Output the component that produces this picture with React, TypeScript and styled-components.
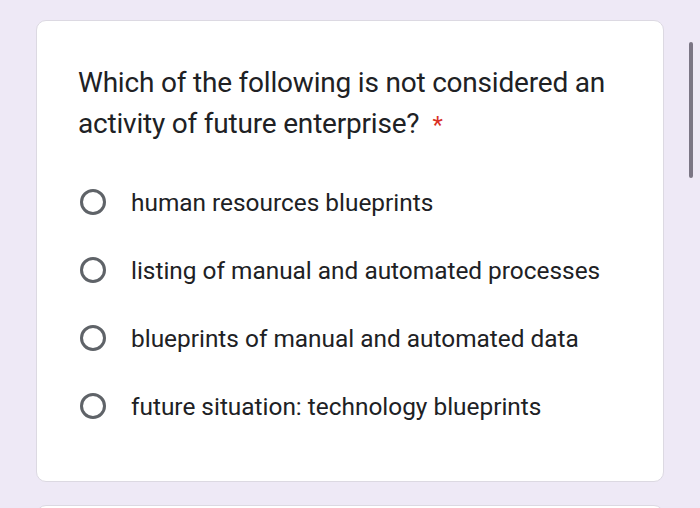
import React from 'react';
import styled, { createGlobalStyle } from 'styled-components';

const GlobalStyle = createGlobalStyle`
  html, body {
    margin: 0;
    padding: 0;
    background: #eee9f6;
  }
  body {
    font-family: Roboto, "Noto Sans", Arial, sans-serif;
  }
`;

const Page = styled.div`
  width: 700px;
  height: 508px;
  overflow: hidden;
  position: relative;
  box-sizing: border-box;
  padding: 20px 36px 0 36px;
  display: flex;
  flex-direction: column;
  gap: 23px;
`;

const Card = styled.div`
  background: #ffffff;
  border: 1px solid #dcd9e2;
  border-radius: 10px;
  box-sizing: border-box;
  padding: ${p => (p.$empty ? '0' : '41px 30px 0 41px')};
  height: ${p => (p.$empty ? '60px' : '462px')};
  flex-shrink: 0;
`;

const Question = styled.div`
  font-family: Roboto, "Noto Sans", sans-serif;
  font-size: 28px;
  line-height: 41px;
  color: #202124;
  letter-spacing: -0.2px;
`;

const Required = styled.span`
  color: #d93025;
  margin-left: 13px;
  font-size: 24px;
`;

const Options = styled.div`
  margin-top: 43px;
  display: flex;
  flex-direction: column;
  gap: 42px;
`;

const Option = styled.label`
  display: flex;
  align-items: center;
  gap: 25px;
  height: 26px;
`;

const Radio = styled.span`
  width: 26px;
  height: 26px;
  box-sizing: border-box;
  border: 3px solid #5f6368;
  border-radius: 50%;
  margin-left: 2px;
  flex-shrink: 0;
`;

const OptionText = styled.span`
  font-family: Roboto, "Noto Sans", sans-serif;
  font-size: 24.4px;
  color: #202124;
`;

const Scrollbar = styled.div`
  position: absolute;
  right: 7px;
  top: 42px;
  width: 4px;
  height: 136px;
  border-radius: 2px;
  background: #7b7685;
`;

const options = [
  'human resources blueprints',
  'listing of manual and automated processes',
  'blueprints of manual and automated data',
  'future situation: technology blueprints',
];

export default function App() {
  return (
    <>
      <GlobalStyle />
      <Page>
        <Card>
          <Question>
            Which of the following is not considered an activity of future enterprise?
            <Required>*</Required>
          </Question>
          <Options>
            {options.map(o => (
              <Option key={o}>
                <Radio />
                <OptionText>{o}</OptionText>
              </Option>
            ))}
          </Options>
        </Card>
        <Card $empty />
        <Scrollbar />
      </Page>
    </>
  );
}
